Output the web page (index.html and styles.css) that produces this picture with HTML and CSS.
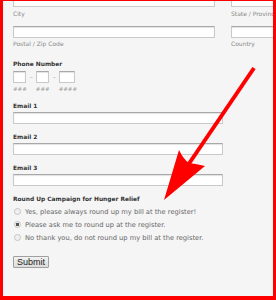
FILE: index.html
```html
<!DOCTYPE html>
<html lang="en">
<head>
  <meta charset="UTF-8">
  <title>Donation Form</title>
  <link rel="stylesheet" href="styles.css">
</head>
<body>

<div class="frame">
  <form class="form">
    <div class="row row-top">
      <div class="col col-main">
        <input type="text" class="text">
        <label class="sub">City</label>
      </div>
      <div class="col col-side">
        <input type="text" class="text">
        <label class="sub">State / Province</label>
      </div>
    </div>

    <div class="row row-second">
      <div class="col col-main">
        <input type="text" class="text">
        <label class="sub">Postal / Zip Code</label>
      </div>
      <div class="col col-side">
        <input type="text" class="text">
        <label class="sub">Country</label>
      </div>
    </div>

    <div class="field phone">
      <label class="title">Phone Number</label>
      <div class="phone-boxes">
        <div class="part">
          <input type="text" class="text short">
          <span class="sub">###</span>
        </div>
        <span class="dash">–</span>
        <div class="part">
          <input type="text" class="text short">
          <span class="sub">###</span>
        </div>
        <span class="dash">–</span>
        <div class="part">
          <input type="text" class="text long">
          <span class="sub">####</span>
        </div>
      </div>
    </div>

    <div class="field">
      <label class="title">Email 1</label>
      <input type="text" class="text email">
    </div>
    <div class="field">
      <label class="title">Email 2</label>
      <input type="text" class="text email">
    </div>
    <div class="field">
      <label class="title">Email 3</label>
      <input type="text" class="text email">
    </div>

    <div class="field roundup">
      <label class="title">Round Up Campaign for Hunger Relief</label>
      <label class="choice"><input type="radio" name="roundup"> Yes, please always round up my bill at the register!</label>
      <label class="choice"><input type="radio" name="roundup" checked> Please ask me to round up at the register.</label>
      <label class="choice"><input type="radio" name="roundup"> No thank you, do not round up my bill at the register.</label>
    </div>

    <button type="button" class="submit">Submit</button>
  </form>

  <!-- annotation arrow -->
  <svg class="arrow" width="276" height="300" viewBox="0 0 276 300">
    <line x1="254" y1="68" x2="186" y2="168" stroke="#ff0000" stroke-width="4"/>
    <path d="M164 200 L179 150 Q184 160 189 163 Q197 164 205 166 Z" fill="#ff0000"/>
  </svg>
</div>

</body>
</html>
```

FILE: styles.css
```css
body {
  margin: 0;
  background: #fff;
  font-family: 'DejaVu Sans', Verdana, sans-serif;
}

.frame {
  position: relative;
  width: 276px;
  height: 300px;
  box-sizing: border-box;
  border: 3px solid #ff0000;
  border-top-width: 1px;
  border-bottom-width: 4px;
  background: #f5f5f5;
  overflow: hidden;
}

.form {
  padding-left: 10px;
}

.row {
  display: flex;
  gap: 16px;
  width: 300px;
}

.row-top {
  margin-top: -6px;
}

.row-second {
  margin-top: 8px;
}

.col-main {
  width: 202px;
}

.col-side {
  width: 80px;
}

.text {
  display: block;
  box-sizing: border-box;
  height: 12px;
  margin: 0;
  padding: 0;
  background: #fff;
  border: 1px solid #c9c9c9;
  border-top-color: #a8a8a8;
  box-shadow: inset 0 1px 1px rgba(0,0,0,0.12);
  width: 100%;
}

.sub {
  display: block;
  font-size: 6px;
  line-height: 8px;
  color: #888;
}

.row-top .sub {
  margin-top: 3px;
}

.row-second .sub {
  margin-top: 2px;
}

.title {
  display: block;
  font-size: 5.9px;
  font-weight: bold;
  line-height: 8px;
  color: #333;
}

.field {
  margin-top: 9px;
}

.field .title {
  margin-bottom: 2px;
}

.phone {
  margin-top: 12px;
}

.phone .title {
  margin-bottom: 3px;
}

.phone-boxes {
  display: flex;
  align-items: flex-start;
}

.part .sub {
  margin-top: 2px;
  font-size: 5.5px;
  color: #999;
}

.short {
  width: 13px;
}

.long {
  width: 16px;
}

.dash {
  width: 9px;
  text-align: center;
  font-size: 6px;
  line-height: 12px;
  color: #999;
}

.email {
  width: 210px;
}

.roundup .title {
  margin-bottom: 2px;
}

.choice {
  display: flex;
  align-items: center;
  gap: 4px;
  height: 13px;
  font-size: 6.7px;
  color: #666;
}

.choice input {
  appearance: none;
  width: 7px;
  height: 7px;
  margin: 0 0 0 1px;
  border: 1px solid #c4c4c4;
  border-radius: 50%;
  background: #f0f0f0;
}

.choice input:checked {
  background: radial-gradient(circle, #555 0 1.5px, #eee 2px);
}

.submit {
  display: block;
  margin-top: 12px;
  width: 36px;
  height: 12px;
  padding: 0;
  font-family: 'Liberation Sans', Arial, sans-serif;
  font-size: 9px;
  line-height: 10px;
  color: #222;
  background: linear-gradient(#f2f2f2, #dcdcdc);
  border: 1px solid #a0a0a0;
  border-radius: 1px;
}

.arrow {
  position: absolute;
  left: -3px;
  top: -1px;
}
```
